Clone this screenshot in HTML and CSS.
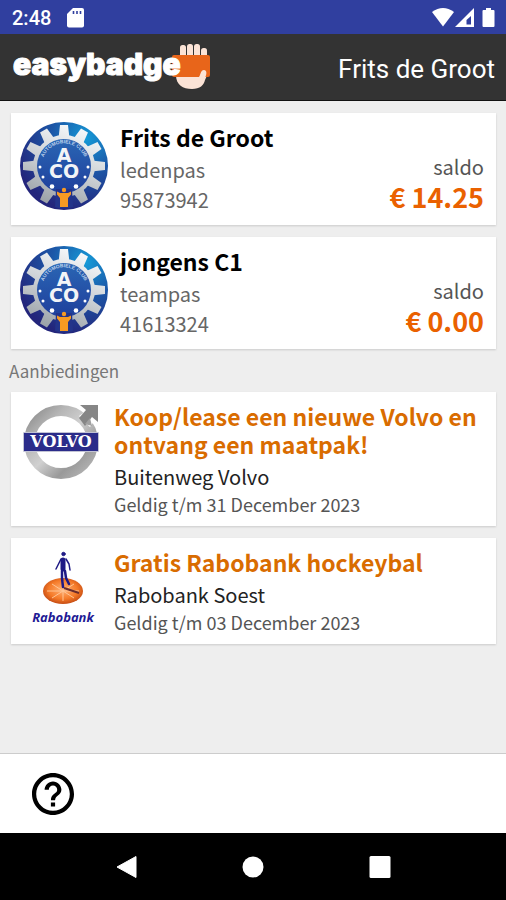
FILE: index.html
```html
<!DOCTYPE html>
<html lang="nl">
    <head>
        <meta charset="utf-8">
        <meta name="viewport" content="width=device-width, initial-scale=1">
        <title>easybadge</title>
        <link rel="stylesheet" href="styles.css">
    </head>
    <body>
        <!-- status bar -->
        <div class="status">
            <span class="time">2:48</span>
            <svg class="sdcard" width="17" height="20" viewBox="0 0 17 20">
                <path d="M6 0h9a2 2 0 0 1 2 2v15.500a2 2 0 0 1-2 2H2a2 2 0 0 1-2-2V6z" fill="#fff"/>
                <path d="M6.500 3v3M10 3v3M13.500 3v3" stroke="#303f9f" stroke-width="1.600"/>
            </svg>
            <svg class="signals" width="64" height="20" viewBox="0 0 64 20">
                <path d="M0 4Q11-4 22 4L11 18.500z" fill="#fff"/>
                <path d="M42 0v19H23z" fill="#fff"/>
                <path d="M39 8v8.500h-4.500v-4.500z" fill="#303f9f"/>
                <path d="M54 2V0h5v2h2.500a1 1 0 0 1 1 1v15a1 1 0 0 1-1 1h-10a1 1 0 0 1-1-1V3a1 1 0 0 1 1-1z" fill="#fff"/>
            </svg>
        </div>

        <header class="topbar">
            <svg class="logo" width="204" height="50" viewBox="0 0 204 50" role="img" aria-label="easybadge">
                <path d="M168 33c0 10 7 14 16 14 8 0 12-4 13-9l5-11-4-8z" fill="#fbe3d6"/>
                <g fill="#fbe3d6">
                    <rect x="172" y="3" width="6" height="14" rx="2.500"/>
                    <rect x="179" y="2" width="6" height="16" rx="2.500"/>
                    <rect x="186" y="2" width="6" height="16" rx="2.500"/>
                    <rect x="193" y="6" width="6" height="12" rx="2.500"/>
                </g>
                <rect x="164" y="13" width="38" height="22" rx="2" fill="#e8651a"/>
                <path d="M190 36c3-2 2-8 6-8 3 0 3 4 1 8z" fill="#fbe3d6"/>
                <text x="5" y="33" class="logo-text">easybadge</text>
            </svg>
            <span class="user">Frits de Groot</span>
        </header>

        <main class="content">
            <section class="card pass">
                <svg class="badge" width="88" height="88" viewBox="0 0 88 88">
                    <defs>
                        <radialGradient id="blue" cx="75%" cy="18%" r="85%">
                            <stop offset="0" stop-color="#159bd8"/>
                            <stop offset="0.450" stop-color="#1c58a8"/>
                            <stop offset="1" stop-color="#23257b"/>
                        </radialGradient>
                        <linearGradient id="inner" x1="0" y1="0" x2="0" y2="1">
                            <stop offset="0" stop-color="#2a66b4"/>
                            <stop offset="1" stop-color="#1f3f9c"/>
                        </linearGradient>
                        <linearGradient id="silver" gradientUnits="userSpaceOnUse" x1="60" y1="6" x2="30" y2="82">
                            <stop offset="0" stop-color="#f6f8fa"/>
                            <stop offset="0.500" stop-color="#ccd1d5"/>
                            <stop offset="1" stop-color="#9ca2a8"/>
                        </linearGradient>
                        <path id="arc" d="M22.500 48A22 22 0 1 1 65.500 48"/>
                        <mask id="gear">
                            <g fill="#fff">
                                <circle cx="44" cy="44" r="31"/>
                                <g id="quarter">
                                    <path id="tooth" d="M40 3h8l1 9q0 4 3 5.500H36q3-1.500 3-5.500z"/>
                                    <use href="#tooth" transform="rotate(30 44 44)"/>
                                    <use href="#tooth" transform="rotate(60 44 44)"/>
                                </g>
                                <use href="#quarter" transform="rotate(90 44 44)"/>
                                <use href="#quarter" transform="rotate(180 44 44)"/>
                                <use href="#quarter" transform="rotate(270 44 44)"/>
                            </g>
                        </mask>
                    </defs>
                    <g id="aco">
                        <circle cx="44" cy="44" r="44" fill="url(#blue)"/>
                        <rect width="88" height="88" fill="url(#silver)" mask="url(#gear)"/>
                        <circle cx="44" cy="44" r="27" fill="url(#inner)"/>
                        <text class="arc-text"><textPath href="#arc" startOffset="50%">AUTOMOBIELE CLUB</textPath></text>
                        <text x="44" y="40" class="aco-text">A</text>
                        <text x="44" y="56" class="aco-text">CO</text>
                        <g fill="#fff">
                            <circle cx="20" cy="45" r="1.500"/>
                            <circle cx="68" cy="45" r="1.500"/>
                            <circle cx="23" cy="55" r="1.500"/>
                            <circle cx="65" cy="55" r="1.500"/>
                            <circle cx="32" cy="64.500" r="2.300"/>
                            <circle cx="56" cy="64.500" r="2.300"/>
                        </g>
                        <path d="M36 67h16l1 18q-9 3-18 0z" fill="#23348a"/>
                        <circle cx="44" cy="68" r="2.200" fill="#f79a23"/>
                        <path d="M37 69.500l3 1.500h8l3-1.500v3L48 76v9h-8v-9l-3-3.500z" fill="#f79a23"/>
                    </g>
                </svg>
                <div class="info">
                    <h2 class="name">Frits de Groot</h2>
                    <p class="line">ledenpas</p>
                    <p class="line">95873942</p>
                </div>
                <div class="balance">
                    <p class="label">saldo</p>
                    <p class="amount">€ 14.25</p>
                </div>
            </section>

            <section class="card pass">
                <svg class="badge" width="88" height="88" viewBox="0 0 88 88"><use href="#aco"/></svg>
                <div class="info">
                    <h2 class="name">jongens C1</h2>
                    <p class="line">teampas</p>
                    <p class="line">41613324</p>
                </div>
                <div class="balance">
                    <p class="label">saldo</p>
                    <p class="amount">€ 0.00</p>
                </div>
            </section>

            <h3 class="heading">Aanbiedingen</h3>

            <section class="card offer">
                <svg class="brand" width="76" height="76" viewBox="0 0 76 76">
                    <defs>
                        <linearGradient id="chrome" x1="0" y1="0" x2="1" y2="1">
                            <stop offset="0" stop-color="#8b8b8b"/>
                            <stop offset="0.250" stop-color="#b5b5b5"/>
                            <stop offset="0.500" stop-color="#d0d0d0"/>
                            <stop offset="0.750" stop-color="#999"/>
                            <stop offset="1" stop-color="#b9b9b9"/>
                        </linearGradient>
                    </defs>
                    <circle cx="38" cy="38" r="31.500" fill="none" stroke="url(#chrome)" stroke-width="11"/>
                    <path d="M56 12l7-5-4-4h3l14 14v3l-4-4-5 7z" fill="#fff"/>
                    <path d="M56 14l7-8-6-5h18v17l-6-5-7 9z" fill="#868686"/>
                    <path d="M62 20l5-6 2 8z" fill="#a0a0a0"/>
                    <rect x="0" y="28" width="76" height="20" rx="1" fill="#c2c3d4"/>
                    <rect x="1" y="29" width="74" height="18" fill="#2b2c8a"/>
                    <text x="38" y="43" class="volvo-text">VOLVO</text>
                </svg>
                <div class="info">
                    <h2 class="title">Koop/lease een nieuwe Volvo en ontvang een maatpak!</h2>
                    <p class="shop">Buitenweg Volvo</p>
                    <p class="valid">Geldig t/m 31 December 2023</p>
                </div>
            </section>

            <section class="card offer">
                <svg class="brand" width="76" height="76" viewBox="0 0 76 76">
                    <defs>
                        <radialGradient id="disc" cx="50%" cy="45%" r="60%">
                            <stop offset="0" stop-color="#ffb277"/>
                            <stop offset="0.600" stop-color="#f57a28"/>
                            <stop offset="1" stop-color="#b9400e"/>
                        </radialGradient>
                    </defs>
                    <ellipse cx="40" cy="41" rx="20" ry="13" fill="url(#disc)"/>
                    <g stroke="#ffc493" stroke-width="1" fill="none">
                        <path d="M40 31v20M24 41h32M29 34l22 14M51 34L29 48"/>
                    </g>
                    <path d="M41 38l15 5" stroke="#6b2c2c" stroke-width="2"/>
                    <g stroke="#1f1a85" fill="none" stroke-linecap="round" stroke-linejoin="round">
                        <circle cx="40.500" cy="4" r="1.700" fill="#1f1a85" stroke-width="1"/>
                        <path d="M40 10v9" stroke-width="5"/>
                        <path d="M38 9l-3 6-2 4M43 9l3 5 1 6" stroke-width="1.500"/>
                        <path d="M39 21v7l1 9M42 21l1 7 3 6" stroke-width="2.500"/>
                    </g>
                    <text x="40" y="72" class="rabo-text">Rabobank</text>
                </svg>
                <div class="info">
                    <h2 class="title">Gratis Rabobank hockeybal</h2>
                    <p class="shop">Rabobank Soest</p>
                    <p class="valid">Geldig t/m 03 December 2023</p>
                </div>
            </section>
        </main>

        <footer class="toolbar">
            <button class="help" type="button" aria-label="Help">
                <svg width="42" height="42" viewBox="2 2 20 20">
                    <path d="M11 18h2v-2h-2v2zm1-16C6.480 2 2 6.480 2 12s4.480 10 10 10 10-4.480 10-10S17.520 2 12 2zm0 18c-4.410 0-8-3.590-8-8s3.590-8 8-8 8 3.590 8 8-3.590 8-8 8zm0-14c-2.210 0-4 1.790-4 4h2c0-1.100.9-2 2-2s2 .9 2 2c0 2-3 1.750-3 5h2c0-2.250 3-2.500 3-5 0-2.210-1.790-4-4-4z"/>
                </svg>
            </button>
        </footer>

        <nav class="navbar">
            <button type="button" aria-label="Terug">
                <svg width="24" height="24" viewBox="0 0 24 24"><path d="M21 1.500v21L2 12z" fill="#fff" stroke="#fff" stroke-linejoin="round"/></svg>
            </button>
            <button type="button" aria-label="Start">
                <svg width="24" height="24" viewBox="0 0 24 24"><circle cx="12" cy="12" r="10.500" fill="#fff"/></svg>
            </button>
            <button type="button" aria-label="Recent">
                <svg width="24" height="24" viewBox="0 0 24 24"><rect x="1.500" y="1" width="21" height="22" rx="1.500" fill="#fff"/></svg>
            </button>
        </nav>
    </body>
</html>
```
FILE: styles.css
```css
* {
    box-sizing: border-box;
}
body {
    margin: 0;
    min-height: 100vh;
    display: flex;
    flex-direction: column;
    background-color: #eee;
    font-family: "Noto Sans CJK SC", "Noto Sans", sans-serif;
    color: #000;
}
h2, h3, p {
    margin: 0;
}
svg {
    display: block;
    flex-shrink: 0;
}
button {
    padding: 0;
    border: none;
    background: none;
    cursor: pointer;
}

.status {
    display: flex;
    align-items: center;
    height: 34px;
    padding: 2px 10px 0 12px;
    background-color: #303f9f;
    color: white;
    font: 500 20px Roboto, sans-serif;
}
.sdcard {
    margin-left: 16px;
}
.signals {
    margin-left: auto;
}

.topbar {
    display: flex;
    align-items: center;
    justify-content: space-between;
    height: 67px;
    padding: 0 11px 0 8px;
    border-bottom: 1px solid #111;
    background-color: #333;
}
.logo-text {
    font: 900 30px Inter, sans-serif;
    fill: white;
    stroke: white;
    stroke-width: 1px;
    stroke-linejoin: round;
}
.user {
    padding-top: 4px;
    color: white;
    font: 400 26px Roboto, sans-serif;
}

.content {
    flex: 1;
    padding: 12px 10px 12px 11px;
}
.card {
    display: flex;
    margin-bottom: 12px;
    background-color: white;
    box-shadow: 0 1px 2px rgba(0, 0, 0, 0.15);
}
.info {
    flex: 1;
    min-width: 0;
}
.pass {
    gap: 12px;
    padding: 6px 12px 10px 9px;
}
.badge {
    margin-top: 3px;
}
.name {
    font-size: 23px;
    line-height: 36px;
}
.line {
    font-size: 20px;
    line-height: 30px;
    color: #666;
}
.balance {
    padding-top: 34px;
    text-align: right;
}
.label {
    font-size: 20px;
    line-height: 28px;
    color: #555;
}
.amount {
    font-size: 27px;
    font-weight: bold;
    line-height: 32px;
    color: #ea6100;
}

.heading {
    margin: -4px 0 8px -2px;
    font-size: 17px;
    font-weight: normal;
    line-height: 27px;
    color: #777;
}

.offer {
    gap: 15px;
    padding: 10px 12px 9px;
}
.brand {
    margin-top: 2px;
}
.title {
    margin-bottom: 4px;
    font-size: 23px;
    line-height: 28px;
    color: #d96c00;
}
.shop {
    font-size: 20px;
    line-height: 30px;
    color: #222;
}
.valid {
    font-size: 18px;
    line-height: 25px;
    color: #555;
}

.toolbar {
    display: flex;
    align-items: center;
    height: 80px;
    padding: 0 32px;
    border-top: 1px solid #ccc;
    background-color: white;
}
.navbar {
    display: flex;
    justify-content: center;
    height: 67px;
    background-color: black;
}
.navbar button {
    display: flex;
    align-items: center;
    justify-content: center;
    width: 25%;
}

/* text inside the logos */
.arc-text {
    font: bold 5px "Liberation Sans", sans-serif;
    fill: #b9cfea;
    text-anchor: middle;
}
.aco-text {
    font: bold 19px "DejaVu Sans", sans-serif;
    fill: #f2f4f7;
    text-anchor: middle;
}
.volvo-text {
    font: bold 16px "DejaVu Serif", serif;
    fill: white;
    text-anchor: middle;
}
.rabo-text {
    font: italic bold 13px "Open Sans", sans-serif;
    fill: #1f1a95;
    text-anchor: middle;
}
```
